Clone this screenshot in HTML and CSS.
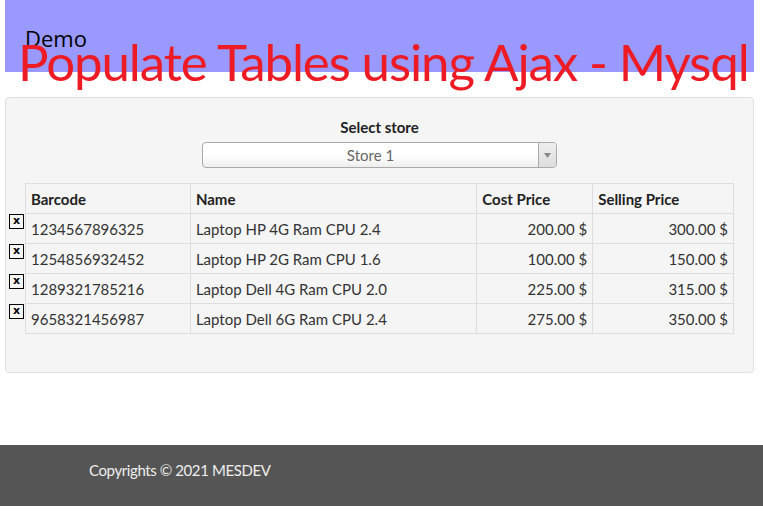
FILE: index.html
```html
<!DOCTYPE html>
<html>
<head>
<meta charset="utf-8">
<link rel="stylesheet" href="styles.css">
</head>
<body>
<div class="page">
  <header class="header">
    <div class="brand">Demo</div>
    <h1 class="title">Populate Tables using Ajax - Mysql</h1>
  </header>
  <section class="panel">
    <div class="label">Select store</div>
    <div class="select">
      <span class="select-text">Store 1</span>
      <span class="select-arrow"><svg width="7" height="5" viewBox="0 0 7 5"><path d="M0 0H7L3.5 5Z" fill="#888"/></svg></span>
    </div>
    <table class="grid">
      <thead>
        <tr><th class="del"></th><th class="c1">Barcode</th><th class="c2">Name</th><th class="c3">Cost Price</th><th class="c4">Selling Price</th></tr>
      </thead>
      <tbody>
        <tr><td class="del"><span class="x">x</span></td><td>1234567896325</td><td>Laptop HP 4G Ram CPU 2.4</td><td class="num">200.00 $</td><td class="num">300.00 $</td></tr>
        <tr><td class="del"><span class="x">x</span></td><td>1254856932452</td><td>Laptop HP 2G Ram CPU 1.6</td><td class="num">100.00 $</td><td class="num">150.00 $</td></tr>
        <tr><td class="del"><span class="x">x</span></td><td>1289321785216</td><td>Laptop Dell 4G Ram CPU 2.0</td><td class="num">225.00 $</td><td class="num">315.00 $</td></tr>
        <tr><td class="del"><span class="x">x</span></td><td>9658321456987</td><td>Laptop Dell 6G Ram CPU 2.4</td><td class="num">275.00 $</td><td class="num">350.00 $</td></tr>
      </tbody>
    </table>
  </section>
</div>
<footer class="footer">
  <div class="copy">Copyrights © 2021 MESDEV</div>
</footer>
</body>
</html>
```
FILE: styles.css
```css
html, body { margin: 0; padding: 0; background: #fff; }
body { font-family: Lato, "Open Sans", sans-serif; color: #333; }
.page { padding: 0 9px 0 5px; }
.header {
  position: relative;
  background: #9999ff;
  height: 72px;
}
.brand {
  font-family: "Open Sans", "Noto Sans", sans-serif;
  font-size: 22px;
  color: #000;
  padding: 24px 0 0 20px;
  line-height: 28px;
}
.title {
  position: absolute;
  left: 13px;
  top: 32px;
  margin: 0;
  font-family: Lato, "Open Sans", sans-serif;
  font-weight: 400;
  font-size: 51px;
  line-height: 60px;
  letter-spacing: -1.1px;
  color: #ed1c24;
  white-space: nowrap;
}
.panel {
  margin-top: 25px;
  background: #f5f5f5;
  border: 1px solid #e0e0e0;
  border-radius: 4px;
  padding: 19px 19px 38px 3px;
  display: flex;
  flex-direction: column;
  align-items: center;
}
.label {
  font-weight: 700;
  font-size: 15px;
  line-height: 20px;
  color: #222;
  margin-left: 16px;
}
.select {
  margin: 5px 0 0 16px;
  width: 353px;
  height: 24px;
  border: 1px solid #aaa;
  border-radius: 4px;
  background: linear-gradient(#fff 50%, #eee);
  display: flex;
  box-sizing: content-box;
}
.select-text {
  flex: 1;
  text-align: center;
  font-size: 15px;
  line-height: 24px;
  color: #666;
}
.select-arrow {
  width: 17px;
  border-left: 1px solid #aaa;
  background: linear-gradient(#eee, #ddd);
  border-radius: 0 4px 4px 0;
  display: flex;
  align-items: center;
  justify-content: center;
}
.grid {
  align-self: flex-start;
  margin-top: 15px;
  border-collapse: collapse;
  font-size: 15px;
  color: #333;
}
.grid th, .grid td {
  border: 1px solid #ddd;
  height: 29px;
  padding: 0 5px;
  text-align: left;
  vertical-align: middle;
}
.grid th { font-weight: 700; color: #222; }
.grid td.num { text-align: right; }
.grid .del {
  border: none;
  width: 16px;
  padding: 0;
  vertical-align: top;
}
.grid .c1 { width: 154px; }
.grid .c2 { width: 276px; }
.grid .c3 { width: 105px; }
.grid .c4 { width: 130px; }
.x {
  display: block;
  width: 15px;
  height: 15px;
  border: 1px solid #000;
  font-family: "DejaVu Sans", sans-serif;
  font-weight: 700;
  font-size: 11px;
  line-height: 12px;
  text-align: center;
  color: #000;
  box-sizing: border-box;
}
.footer {
  margin-top: 72px;
  background: #555;
  height: 61px;
  box-sizing: border-box;
  padding-top: 15px;
}
.copy {
  padding-left: 89px;
  color: #eee;
  font-size: 15px;
  line-height: 20px;
  letter-spacing: -0.4px;
}
```
